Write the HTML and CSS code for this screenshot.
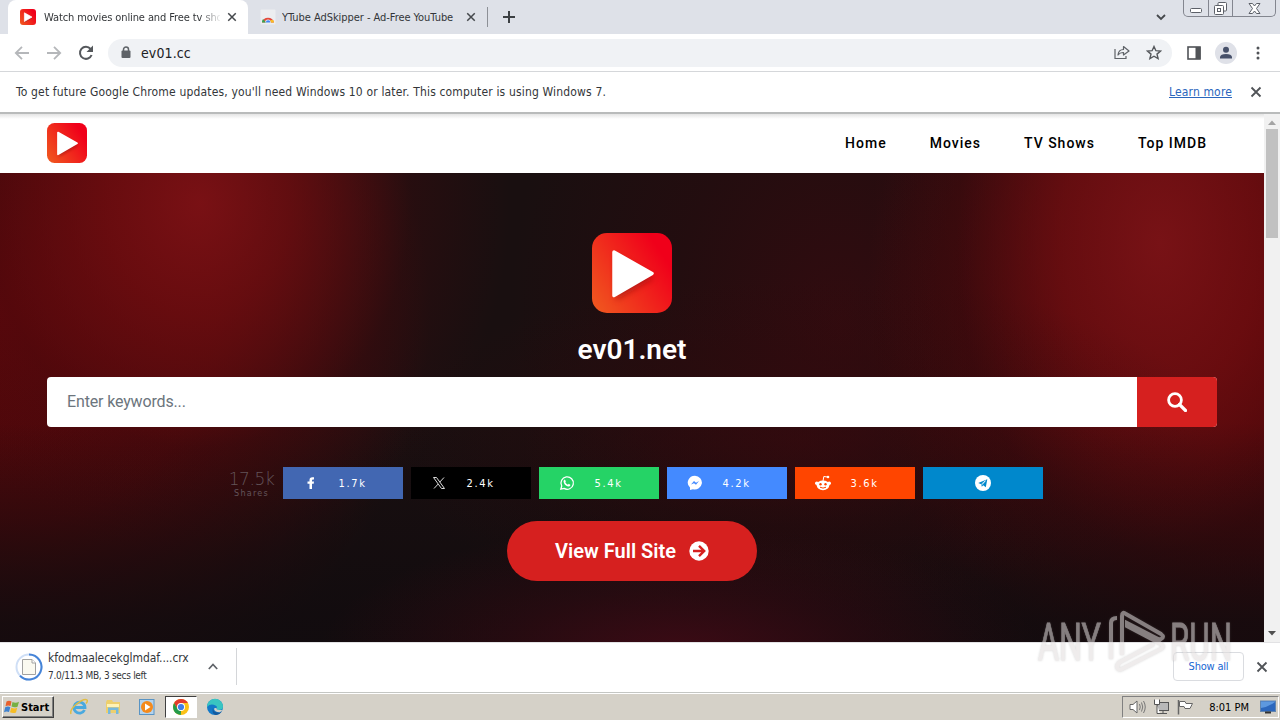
FILE: index.html
```
<!DOCTYPE html>
<html lang="en">
<head>
    <meta charset="utf-8">
    <title>Watch movies online and Free tv shows</title>
    <link rel="stylesheet" href="styles.css">
</head>
<body>

    <!-- shared shapes -->
    <svg class="defs" width="0" height="0">
        <defs>
            <linearGradient id="logo-fill" x1="0" y1="0.9" x2="0.9" y2="0.3">
                <stop offset="0" stop-color="#f0571f"/>
                <stop offset="1" stop-color="#f0001a"/>
            </linearGradient>
            <filter id="soft" x="-30%" y="-30%" width="160%" height="160%">
                <feGaussianBlur stdDeviation="3"/>
            </filter>
            <symbol id="logo" viewBox="0 0 80 80">
                <rect width="80" height="80" rx="15" fill="url(#logo-fill)"/>
                <path d="M24 22 L62 45 L24 67 Z" fill="#8c1010" opacity="0.55" filter="url(#soft)"/>
                <path d="M22 19 L60 40.500 L22 62.500 Z" fill="#fff" stroke="#fff" stroke-width="3.500" stroke-linejoin="round"/>
            </symbol>
            <symbol id="cross" viewBox="0 0 12 12">
                <path d="M1.500 1.500 L10.500 10.500 M10.500 1.500 L1.500 10.500" fill="none" stroke="currentColor" stroke-width="1.800"/>
            </symbol>
        </defs>
    </svg>

    <div class="tabs">
        <div class="tab active">
            <svg class="favicon" width="16" height="16"><use href="#logo"/></svg>
            <span class="tab-title first-title">Watch movies online and Free tv shows</span>
            <svg class="tab-close" width="10" height="10"><use href="#cross"/></svg>
        </div>
        <div class="tab">
            <svg class="favicon" width="16" height="16" viewBox="0 0 16 16">
                <rect x="0.500" y="0.500" width="15" height="15" rx="1" fill="#eceef0"/>
                <path d="M2 13.500 A6.200 6.200 0 0 1 14 13.500 H11 A3 3 0 0 0 5 13.500 Z" fill="#e5493a"/>
                <path d="M2 13.500 A6.200 6.200 0 0 1 3 10 L6 13.500 Z" fill="#35a652"/>
                <path d="M10.500 11 H13.300 L14 13.500 H10.800 Z" fill="#f9bd23"/>
                <path d="M5.800 13.500 A2.300 2.300 0 0 1 10.400 13.500 Z" fill="#4285f4"/>
            </svg>
            <span class="tab-title second-title">YTube AdSkipper - Ad-Free YouTube</span>
            <svg class="tab-close" width="10" height="10"><use href="#cross"/></svg>
        </div>
        <span class="tab-divider"></span>
        <svg class="new-tab" width="12" height="12" viewBox="0 0 12 12"><path d="M6 0 V12 M0 6 H12" stroke="#3c4043" stroke-width="2"/></svg>
        <svg class="tab-search" width="10" height="7" viewBox="0 0 10 7"><path d="M1 1 L5 5 L9 1" fill="none" stroke="#45484c" stroke-width="1.800"/></svg>
        <div class="window-buttons">
            <span class="minimize"><svg width="12" height="5" viewBox="0 0 12 5"><rect x="0.500" y="0.500" width="11" height="4" rx="1" fill="#fff" stroke="#5c6068"/></svg></span>
            <span class="restore"><svg width="13" height="13" viewBox="0 0 13 13"><path d="M4 3.500 V1.500 Q4 0.500 5 0.500 H11.500 Q12.500 0.500 12.500 1.500 V8 Q12.500 9 11.500 9 H9.500" fill="#fff" stroke="#5c6068"/><rect x="0.500" y="3.500" width="9" height="9" rx="1" fill="#fff" stroke="#5c6068"/><rect x="3.500" y="6.500" width="3" height="3" fill="#fff" stroke="#5c6068"/></svg></span>
            <span class="shut"><svg width="13" height="11" viewBox="0 0 13 11"><path d="M1 0.500 H4.500 L6.500 3 L8.500 0.500 H12 L8.500 5.500 L12 10.500 H8.500 L6.500 8 L4.500 10.500 H1 L4.500 5.500 Z" fill="#fff" stroke="#5c6068"/></svg></span>
        </div>
    </div>

    <div class="toolbar">
        <svg class="nav-icon" width="16" height="14" viewBox="0 0 16 14"><path d="M15 7 H2 M8 0.800 L1.800 7 L8 13.200" fill="none" stroke="#b5b7ba" stroke-width="1.800"/></svg>
        <svg class="nav-icon" width="16" height="14" viewBox="0 0 16 14"><path d="M1 7 H14 M8 0.800 L14.200 7 L8 13.200" fill="none" stroke="#b5b7ba" stroke-width="1.800"/></svg>
        <svg class="nav-icon reload" width="16" height="16" viewBox="0 0 16 16"><path d="M13.600 10 A6 6 0 1 1 12.600 4" fill="none" stroke="#55585c" stroke-width="2"/><path d="M15 0.500 V7 H8.500 Z" fill="#55585c"/></svg>
        <div class="address">
            <svg width="10" height="13" viewBox="0 0 10 13"><path d="M2.500 5 V3.500 A2.500 2.500 0 0 1 7.500 3.500 V5" fill="none" stroke="#5f6368" stroke-width="1.500"/><rect x="0.500" y="4.500" width="9" height="7.500" rx="1" fill="#5f6368"/></svg>
            <span class="url">ev01.cc</span>
            <svg class="share" width="16" height="15" viewBox="0 0 16 15"><path d="M1 4 V13.500 H12 V11" fill="none" stroke="#5f6368" stroke-width="1.200"/><path d="M4 10 Q4.500 4.500 9.500 4.500 V1.500 L15 6 L9.500 10 V7.500 Q6 7.300 4 10 Z" fill="none" stroke="#5f6368" stroke-width="1.200" stroke-linejoin="round"/></svg>
            <svg width="16" height="15" viewBox="0 0 16 15"><path d="M8 1.500 L9.900 5.700 L14.500 6.100 L11 9.100 L12.100 13.600 L8 11.200 L3.900 13.600 L5 9.100 L1.500 6.100 L6.100 5.700 Z" fill="none" stroke="#55585c" stroke-width="1.400"/></svg>
        </div>
        <svg class="panel-icon" width="14" height="14" viewBox="0 0 14 14"><rect x="1" y="1" width="12" height="12" fill="#fff" stroke="#505357" stroke-width="1.600"/><rect x="8.500" y="1" width="5" height="12" fill="#505357"/></svg>
        <svg class="profile" width="22" height="22" viewBox="0 0 22 22"><circle cx="11" cy="11" r="11" fill="#dfe1e8"/><circle cx="11" cy="7.800" r="3" fill="#47516a"/><path d="M5 16.500 V15 Q5.500 12 11 12 Q16.500 12 17 15 V16.500 Z" fill="#47516a"/></svg>
        <svg class="menu-dots" width="4" height="14" viewBox="0 0 4 14"><g fill="#505357"><circle cx="2" cy="2" r="1.500"/><circle cx="2" cy="7" r="1.500"/><circle cx="2" cy="12" r="1.500"/></g></svg>
    </div>

    <div class="infobar">
        <span class="notice">To get future Google Chrome updates, you'll need Windows 10 or later. This computer is using Windows 7.</span>
        <a class="learn-more">Learn more</a>
        <svg class="info-close" width="12" height="12"><use href="#cross"/></svg>
    </div>

    <div class="viewport">
        <div class="page">
            <div class="header">
                <svg width="40" height="40"><use href="#logo"/></svg>
                <div class="menu">
                    <a>Home</a>
                    <a>Movies</a>
                    <a>TV Shows</a>
                    <a>Top IMDB</a>
                </div>
            </div>
            <div class="hero">
                <svg class="hero-logo" width="80" height="80"><use href="#logo"/></svg>
                <h1>ev01.net</h1>
                <div class="search">
                    <span class="keywords">Enter keywords...</span>
                    <span class="search-button">
                        <svg width="20" height="20" viewBox="0 0 20 20"><circle cx="8" cy="8" r="6.400" fill="none" stroke="#fff" stroke-width="2.800"/><path d="M12.500 12.500 L18.500 18.500" stroke="#fff" stroke-width="3.200" stroke-linecap="round"/></svg>
                    </span>
                </div>
                <div class="shares">
                    <div class="total"><b>17.5k</b><span>Shares</span></div>
                    <div class="share-button facebook">
                        <svg width="16" height="16" viewBox="0 0 16 16"><path d="M6.500 14 V8.800 H4.500 V6.500 H6.500 V5 Q6.500 2.300 9.300 2.300 H11 V4.500 H10 Q9 4.500 9 5.500 V6.500 H11 L10.700 8.800 H9 V14 Z" fill="#fff"/></svg>
                        <span>1.7k</span>
                    </div>
                    <div class="share-button twitter">
                        <svg width="16" height="16" viewBox="0 0 16 16"><path d="M2.500 2.500 H5.500 L13.500 13.500 H10.500 Z M13 2.500 L8.700 7.200 M7.200 9 L3 13.500" fill="none" stroke="#ddd" stroke-width="1"/></svg>
                        <span>2.4k</span>
                    </div>
                    <div class="share-button whatsapp">
                        <svg width="16" height="16" viewBox="0 0 16 16"><path d="M1.800 14.200 L2.700 11 A6.200 6.200 0 1 1 5 13.400 Z" fill="none" stroke="#fff" stroke-width="1.300"/><path d="M5.800 4.500 L6.900 6.300 L6.300 7.200 Q7.200 9 8.900 9.700 L9.800 8.800 L11.500 9.900 Q10.800 11.700 9 11.400 Q5.200 10.300 4.500 6.400 Q4.500 4.900 5.800 4.500 Z" fill="#fff"/></svg>
                        <span>5.4k</span>
                    </div>
                    <div class="share-button messenger">
                        <svg width="16" height="16" viewBox="0 0 16 16"><path d="M8 0.800 A7.200 6.800 0 1 1 6 14.200 L3 15 V12.500 A7.200 6.800 0 0 1 8 0.800 Z" fill="#fff"/><path d="M4 9.500 L7 6 L9 7.800 L12 6 L9 9.800 L7 8.200 Z" fill="#448aff"/></svg>
                        <span>4.2k</span>
                    </div>
                    <div class="share-button reddit">
                        <svg width="16" height="16" viewBox="0 0 16 16"><g fill="#fff"><ellipse cx="8" cy="10.300" rx="6.300" ry="4.900"/><circle cx="1.800" cy="8.300" r="1.800"/><circle cx="14.200" cy="8.300" r="1.800"/><circle cx="13" cy="2" r="1.300"/></g><path d="M8 6 L8.800 1.500 L12.500 2" fill="none" stroke="#fff" stroke-width="1"/><g fill="#ff4500"><circle cx="5.500" cy="9.300" r="1.200"/><circle cx="10.500" cy="9.300" r="1.200"/></g><path d="M5 12.200 Q8 14 11 12.200" fill="none" stroke="#ff4500" stroke-width="1"/></svg>
                        <span>3.6k</span>
                    </div>
                    <div class="share-button telegram">
                        <svg width="16" height="16" viewBox="0 0 16 16"><circle cx="8" cy="8" r="8" fill="#fff"/><path d="M3.200 7.900 L12.300 4.200 L10.800 12.200 L8.200 10.300 L6.800 11.700 L6.300 9.300 Z" fill="#0088cc"/><path d="M6.400 9.200 L10.500 5.700 L7.200 9.700" fill="none" stroke="#fff" stroke-width="0.700"/></svg>
                    </div>
                </div>
                <a class="full-site">
                    <span>View Full Site</span>
                    <svg width="20" height="20" viewBox="0 0 20 20"><circle cx="10" cy="10" r="9.700" fill="#fff"/><path d="M4 10 H15 M10 4.800 L15.200 10 L10 15.200" fill="none" stroke="#d6201f" stroke-width="2.400"/></svg>
                </a>
            </div>
        </div>
        <div class="scrollbar">
            <svg width="8" height="5" viewBox="0 0 8 5"><path d="M0 5 L4 0.500 L8 5 Z" fill="#a3a3a3"/></svg>
            <div class="thumb"></div>
            <svg class="scroll-down" width="8" height="5" viewBox="0 0 8 5"><path d="M0 0 L4 4.500 L8 0 Z" fill="#505050"/></svg>
        </div>
    </div>

    <div class="downloads">
        <svg class="progress" width="28" height="28" viewBox="0 0 28 28">
            <circle cx="14" cy="14" r="12.500" fill="none" stroke="#cfdff6" stroke-width="2"/>
            <path d="M14 1.500 A12.500 12.500 0 1 1 5 22.700" fill="none" stroke="#4584d8" stroke-width="2"/>
            <path d="M7.500 6.500 H17 L20.500 10 V21.500 H7.500 Z" fill="#fbfaf0" stroke="#a2a2a0"/>
            <path d="M17 6.500 V10 H20.500" fill="#fff" stroke="#a2a2a0"/>
        </svg>
        <div class="download-text">
            <span class="file-name">kfodmaalecekglmdaf....crx</span>
            <span class="file-status">7.0/11.3 MB, 3 secs left</span>
        </div>
        <svg class="caret" width="10" height="7" viewBox="0 0 10 7"><path d="M0.800 6 L5 1.500 L9.200 6" fill="none" stroke="#5f6368" stroke-width="1.700"/></svg>
        <span class="download-divider"></span>
        <a class="show-all">Show all</a>
        <svg class="downloads-close" width="12" height="12"><use href="#cross"/></svg>
    </div>

    <div class="taskbar">
        <div class="start">
            <svg width="16" height="14" viewBox="0 0 16 14"><path d="M2.500 1.500 Q5 0 7.500 1.500 L6.500 6 Q4 5 1.500 6.300 Z" fill="#e8602c"/><path d="M8.500 2 Q11.500 3.500 15 1.800 L13.500 6.700 Q10.500 8 7.500 6.500 Z" fill="#76b043"/><path d="M1.200 7.300 Q4 6 6.300 7.200 L5 12 Q2.500 11 0 12.200 Z" fill="#3f82cf"/><path d="M7.300 7.700 Q10.500 9 13.200 7.800 L12 12.500 Q9 13.800 6 12.300 Z" fill="#f6bd26"/></svg>
            <span>Start</span>
        </div>
        <div class="task">
            <svg width="18" height="18" viewBox="0 0 18 18"><path d="M14.500 12 A5.500 5.500 0 1 1 15 9.500 H4.500" fill="none" stroke="#49a9df" stroke-width="2.800"/><path d="M1 16 Q-0.500 12 6 6.500 Q14 0 17 2 Q18 3 16 5.500" fill="none" stroke="#e1bd43" stroke-width="1.500"/></svg>
        </div>
        <div class="task">
            <svg width="18" height="18" viewBox="0 0 18 18"><path d="M2 4 L3 2 H8 L9 4 H16 V15 H2 Z" fill="#edcf6d"/><path d="M3 6 H15 V9 H3 Z" fill="#fff3b5"/><path d="M4 16 V9.500 H14.500 V16 H12 V12 H6.500 V16 Z" fill="#76b9dd"/></svg>
        </div>
        <div class="task">
            <svg width="18" height="18" viewBox="0 0 18 18"><rect x="1.500" y="1.500" width="14.500" height="15" fill="#b4d3ed" stroke="#5994c4"/><circle cx="9" cy="9" r="6" fill="#f48a1c"/><path d="M7 5.500 L12.500 9 L7 12.500 Z" fill="#fff"/></svg>
        </div>
        <div class="task pressed">
            <svg width="16" height="16" viewBox="0 0 16 16"><circle cx="8" cy="8" r="8" fill="#fbc116"/><path d="M1.100 4 A8 8 0 0 1 14.900 4 L8 4 L4.600 10 Z" fill="#e33b2e"/><path d="M1.100 4 L4.600 10 L8 12 L7.800 16 A8 8 0 0 1 1.100 4 Z" fill="#249b4b"/><circle cx="8" cy="8" r="4" fill="#fff"/><circle cx="8" cy="8" r="3.100" fill="#3f7ee8"/></svg>
        </div>
        <div class="task">
            <svg width="18" height="18" viewBox="0 0 18 18"><circle cx="9" cy="9" r="8" fill="#1379c8"/><path d="M1 9 A8 8 0 0 1 17 8.500 Q17 12 12.500 12 Q10.500 12 10.500 10.500 Q12 9 9.500 7.500 Q4.500 5 1 9 Z" fill="#39c5c1"/><path d="M7 10 Q7 15 13.500 14.500 L16 13.500 Q13 17.500 9.500 17 Q5.500 15.500 7 10 Z" fill="#155a9e"/><path d="M10.500 9.800 Q10 12.300 14 12 L16.500 12 L14 14.200 Q8.500 14.500 8 10.500 Z" fill="#d5d1c8"/></svg>
        </div>
        <div class="tray">
            <svg width="17" height="14" viewBox="0 0 17 14"><path d="M1 4.500 H4 L8 1 V13 L4 9.500 H1 Z" fill="#fff" stroke="#666"/><path d="M10.500 4 Q12 7 10.500 10 M12.500 2.500 Q15 7 12.500 11.500 M14.500 1 Q18 7 14.500 13" fill="none" stroke="#777"/></svg>
            <svg width="17" height="16" viewBox="0 0 17 16"><rect x="4.500" y="3.500" width="11" height="8" fill="#b8b8b8" stroke="#555"/><path d="M10 11.500 V14 M6 14.500 H14" stroke="#555"/><path d="M1.500 0.500 V5.500 H6.500 V0.500 M4 5.500 V14.500 H7" fill="#fff" stroke="#555"/></svg>
            <svg width="17" height="16" viewBox="0 0 17 16"><path d="M2.500 2.500 H8 L9 4.500 H15.500 L13 9.500 H8 L7 7.500 H2.500 Z" fill="#fff" stroke="#666"/><path d="M1.500 1 V15.500" stroke="#666" stroke-width="1.500"/></svg>
            <span class="clock">8:01 PM</span>
            <svg width="16" height="14" viewBox="0 0 16 14"><rect x="0.500" y="1" width="15" height="10.500" fill="#2c67bd" stroke="#6184ae"/><path d="M1 8 Q8 7 15 2 V1.500 H1 Z" fill="#5d98df"/><path d="M5 12.500 H11" stroke="#333" stroke-width="2"/></svg>
        </div>
    </div>

    <svg class="watermark" width="200" height="70" viewBox="0 0 200 70">
        <text x="4" y="54" textLength="63" lengthAdjust="spacingAndGlyphs">ANY</text>
        <text x="136" y="54" textLength="62" lengthAdjust="spacingAndGlyphs">RUN</text>
        <path d="M77 53 V17 Q77 12 83 12 M88 49 V10 Q88 5 92 8 L127 28 Q131 31 127 33 Q125 34 122 32 L93 17 V20 L127 38 Q131 41 127 43 L88 63 Q84 65 83 61 Q83 58 86 56 L120 38"/>
    </svg>

</body>
</html>
```
FILE: styles.css
```
* {
    box-sizing: border-box;
}

body {
    display: flex;
    flex-direction: column;
    width: 1280px;
    height: 720px;
    margin: 0;
    overflow: hidden;
    background: #fff;
    color: #333639;
    font-family: "DejaVu Sans Condensed", "DejaVu Sans", sans-serif;
    font-stretch: condensed;
    font-size: 12px;
}

svg {
    flex: none;
    display: block;
}

span, a {
    white-space: nowrap;
}

.defs {
    position: absolute;
}

/* tab strip */
.tabs {
    display: flex;
    align-items: center;
    height: 34px;
    flex: none;
    background: #dee1e8;
}

.tab {
    display: flex;
    align-items: center;
    width: 239px;
    height: 34px;
    padding: 0 11px 0 12px;
}

.tab.active {
    width: 240px;
    margin-left: 8px;
    background: #fff;
    border-radius: 8px 8px 0 0;
}

.favicon {
    margin-right: 8px;
}

.tab-title {
    width: 176px;
    overflow: hidden;
    font-size: 11px;
    letter-spacing: -0.05px;
}

.first-title {
    letter-spacing: -0.1px;
    -webkit-mask-image: linear-gradient(to right, #000 155px, transparent 178px);
}

.second-title {
    margin-left: -2px;
    width: 178px;
}

.tab-close {
    margin-left: auto;
    color: #45484c;
}

.tab-divider {
    width: 1px;
    height: 20px;
    margin-right: 15px;
    background: #8d9096;
}

.tab-search {
    margin-left: auto;
    margin-right: 17px;
}

.window-buttons {
    display: flex;
    align-self: flex-start;
    width: 93px;
    height: 17px;
    margin-right: 4px;
    border: 1px solid #83868f;
    border-top: none;
    border-radius: 0 0 5px 5px;
}

.window-buttons span {
    display: flex;
    justify-content: center;
    width: 25px;
    border-right: 1px solid #83868f;
}

.window-buttons .minimize {
    padding-top: 8px;
}

.window-buttons .restore {
    padding-top: 2px;
}

.window-buttons .shut {
    padding-top: 3px;
    width: 42px;
    border-right: none;
}

/* toolbar */
.toolbar {
    display: flex;
    align-items: center;
    height: 38px;
    flex: none;
    padding-left: 14px;
    padding-right: 20px;
    border-bottom: 1px solid #d5d7da;
}

.nav-icon {
    margin-right: 16px;
}

.nav-icon.reload {
    margin-right: 14px;
}

.address {
    display: flex;
    align-items: center;
    width: 1064px;
    height: 28px;
    padding: 0 10px 0 13px;
    background: #f0f2f5;
    border-radius: 14px;
}

.url {
    margin-left: 10px;
    font-size: 14px;
    letter-spacing: 0.1px;
    color: #202124;
}

.share {
    margin-left: auto;
    margin-right: 16px;
}

.panel-icon {
    margin-left: 15px;
}

.profile {
    margin-left: 14px;
}

.menu-dots {
    margin-left: auto;
}

/* update notice */
.infobar {
    display: flex;
    align-items: center;
    height: 42px;
    flex: none;
    padding: 0 18px 0 16px;
    border-bottom: 2px solid #b9bbbb;
}

.notice {
    letter-spacing: 0.16px;
}

.learn-more {
    margin-left: auto;
    margin-right: 18px;
    color: #2a66bd;
    letter-spacing: 0.15px;
    text-decoration: underline;
}

.info-close, .downloads-close {
    color: #505357;
}

/* page */
.viewport {
    display: flex;
    height: 528px;
    flex: none;
}

.page {
    width: 1264px;
}

.header {
    display: flex;
    align-items: center;
    justify-content: space-between;
    height: 59px;
    padding: 0 57px 1px 47px;
    background: linear-gradient(to bottom, #e4e4e4, #fff 5px);
}

.menu {
    display: flex;
    gap: 43px;
    color: #000;
    font-family: Roboto, sans-serif;
    font-size: 14px;
    font-weight: 500;
    font-stretch: normal;
    letter-spacing: 1px;
}

.hero {
    display: flex;
    flex-direction: column;
    align-items: center;
    height: 469px;
    padding: 60px 47px 0;
    background:
        radial-gradient(ellipse 360px 130px at 680px 480px, rgba(68, 10, 22, 0.85), rgba(56, 10, 18, 0.5) 50%, transparent),
        radial-gradient(ellipse 420px 170px at 800px 270px, rgba(56, 9, 13, 0.6), rgba(50, 9, 12, 0.3) 50%, transparent),
        linear-gradient(to bottom, transparent 250px, rgba(16, 11, 14, 0.8) 450px),
        radial-gradient(ellipse 290px 440px at 1160px 70px, rgba(128, 20, 24, 0.85), rgba(116, 15, 18, 0.7) 35%, rgba(75, 10, 14, 0.3) 70%, transparent),
        radial-gradient(ellipse 310px 360px at 200px 30px, rgba(130, 18, 22, 0.85), rgba(116, 14, 17, 0.7) 30%, rgba(75, 10, 14, 0.28) 68%, transparent),
        radial-gradient(ellipse 430px 420px at 0 140px, rgba(96, 6, 10, 0.9), rgba(88, 6, 9, 0.75) 50%, transparent),
        radial-gradient(ellipse 400px 460px at 1264px 150px, rgba(84, 3, 6, 0.95), rgba(84, 5, 8, 0.7) 50%, transparent),
        radial-gradient(ellipse 330px 440px at 840px 150px, rgba(60, 10, 15, 0.7), rgba(50, 10, 14, 0.4) 50%, transparent),
        #190f10;
}

.hero h1 {
    margin: 19px 0 9px;
    color: #fff;
    font-family: Roboto, sans-serif;
    font-size: 28px;
    font-stretch: normal;
    font-weight: 600;
    line-height: 36px;
}

.search {
    display: flex;
    width: 1170px;
    height: 50px;
    border-radius: 4px;
    overflow: hidden;
    background: #fff;
}

.keywords {
    flex: 1;
    padding-left: 20px;
    color: #6c757d;
    font-family: Roboto, sans-serif;
    font-size: 16px;
    font-stretch: normal;
    letter-spacing: -0.15px;
    line-height: 49px;
}

.search-button {
    display: flex;
    align-items: center;
    justify-content: center;
    width: 80px;
    background: #d6201f;
}

.shares {
    display: flex;
    gap: 8px;
    margin-top: 40px;
    margin-left: 7px;
}

.total {
    display: flex;
    flex-direction: column;
    align-items: center;
    width: 46px;
    padding-top: 3px;
    color: #63545a;
}

.total b {
    font-family: "DejaVu Sans", sans-serif;
    font-size: 17px;
    font-stretch: normal;
    font-weight: 200;
    letter-spacing: -0.4px;
    line-height: 18px;
}

.total span {
    font-size: 9px;
    letter-spacing: 1.2px;
    line-height: 10px;
}

.share-button {
    display: flex;
    align-items: center;
    width: 120px;
    height: 32px;
    padding-left: 20px;
    color: #fff;
    font-size: 11px;
    letter-spacing: 1.7px;
}

.share-button span {
    margin-left: 20px;
}

.facebook {
    background: #4267b2;
}

.twitter {
    background: #000;
}

.whatsapp {
    background: #25d366;
}

.messenger {
    background: #448aff;
}

.reddit {
    background: #ff4500;
}

.telegram {
    justify-content: center;
    padding-left: 0;
    background: #0088cc;
}

.full-site {
    display: flex;
    align-items: center;
    justify-content: center;
    gap: 13px;
    width: 250px;
    height: 60px;
    margin-top: 22px;
    border-radius: 30px;
    background: #d6201f;
    color: #fff;
    font-family: Roboto, sans-serif;
    font-size: 20px;
    font-stretch: normal;
    font-weight: 600;
}

.scrollbar {
    display: flex;
    flex-direction: column;
    align-items: center;
    width: 16px;
    padding: 6px 0;
    background: #f1f1f1;
}

.thumb {
    width: 12px;
    height: 109px;
    margin-top: 4px;
    background: #c1c1c1;
}

.scroll-down {
    margin-top: auto;
}

/* download shelf */
.downloads {
    display: flex;
    align-items: center;
    height: 51px;
    flex: none;
    padding: 0 12px 2px 15px;
    border-top: 1px solid #e2e2e4;
    border-bottom: 1px solid #c4c6c3;
}

.download-text {
    display: flex;
    flex-direction: column;
    width: 144px;
    margin-left: 5px;
    margin-right: 16px;
}

.file-name {
    letter-spacing: -0.08px;
    line-height: 17px;
}

.file-status {
    font-size: 10px;
    line-height: 17px;
    letter-spacing: -0.3px;
}

.download-divider {
    width: 1px;
    height: 37px;
    margin-left: 18px;
    background: #d4d6d9;
}

.show-all {
    width: 71px;
    height: 29px;
    margin-left: auto;
    margin-right: 12px;
    border: 1px solid #dadce0;
    border-radius: 4px;
    color: #1967d2;
    font-size: 11px;
    letter-spacing: -0.2px;
    line-height: 27px;
    text-align: center;
}

/* taskbar */
.taskbar {
    display: flex;
    align-items: center;
    height: 27px;
    flex: none;
    padding-left: 2px;
    padding-right: 1px;
    border-top: 1px solid #fff;
    background: #d5d1c8;
}

.start {
    display: flex;
    align-items: center;
    gap: 1px;
    width: 52px;
    height: 22px;
    margin-right: 9px;
    padding-left: 1px;
    border: 1px solid;
    border-color: #fff #404040 #404040 #fff;
    box-shadow: inset -1px -1px #808080;
    color: #000;
    font-size: 11px;
    font-weight: bold;
}

.task {
    display: flex;
    align-items: center;
    justify-content: center;
    width: 32px;
    height: 22px;
    margin-right: 2px;
}

.task.pressed {
    border: 1px solid;
    border-color: #404040 #fff #fff #404040;
    background: #fff;
}

.tray {
    display: flex;
    align-items: center;
    gap: 7px;
    width: 157px;
    height: 22px;
    margin-left: auto;
    padding: 0 2px 0 6px;
    border: 1px solid;
    border-color: #808080 #fff #fff #808080;
    color: #000;
}

.clock {
    margin-left: auto;
    margin-right: 4px;
    font-size: 11px;
}

/* lies over the page and the download shelf */
.watermark {
    position: absolute;
    left: 1034px;
    top: 606px;
    filter: drop-shadow(0 0 1px rgba(120, 120, 120, 0.5));
    opacity: 0.55;
}

.watermark text {
    fill: #e2dede;
    stroke: #e2dede;
    stroke-width: 0.8;
    font-family: Roboto, sans-serif;
    font-size: 51px;
    font-stretch: normal;
}

.watermark path {
    fill: none;
    stroke: #e2dede;
    stroke-width: 4;
}
```
